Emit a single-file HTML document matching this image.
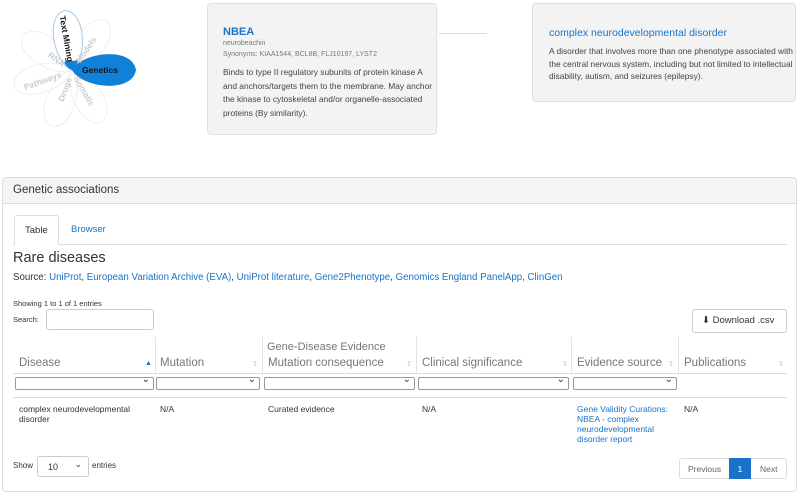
<!DOCTYPE html>
<html><head><meta charset="utf-8"><style>
*{box-sizing:border-box;margin:0;padding:0}
body{width:800px;height:497px;background:#fff;font-family:"Liberation Sans",Arial,sans-serif;color:#333;position:relative;overflow:hidden;font-size:9px}
.a{position:absolute}
.card{position:absolute;background:#f3f3f3;border:1px solid #e0e0e0;border-radius:4px}
.blue{color:#1a73c8}
.th{position:absolute;top:357px;font-size:11.5px;color:#777}
.sep{position:absolute;top:337px;height:36px;border-left:1px solid #e3e3e3}
.sel{position:absolute;top:377px;height:13px;border:1px solid #999;border-radius:2px;background:#fff}
.sel:after{content:"⌄";position:absolute;right:3px;top:-4px;font-size:10px;color:#333}
.srt{position:absolute;top:360px;font-size:7px;color:#ccc}
.td{position:absolute;top:404px;font-size:8.5px;line-height:10px;color:#333}
</style></head><body>
<svg class="a" style="left:0;top:0" width="200" height="140">
<g transform="translate(72,70)">
<g fill="none" stroke="#efefef" stroke-width="1">
<path transform="rotate(-55)" d="M0,0 C8,-16 56,-22 60,0 C56,22 8,16 0,0Z"/>
<path transform="rotate(-145)" d="M0,0 C8,-16 56,-22 60,0 C56,22 8,16 0,0Z"/>
<path transform="rotate(165)" d="M0,0 C8,-16 56,-22 60,0 C56,22 8,16 0,0Z"/>
<path transform="rotate(110)" d="M0,0 C8,-16 56,-22 60,0 C56,22 8,16 0,0Z"/>
<path transform="rotate(60)" d="M0,0 C8,-16 56,-22 60,0 C56,22 8,16 0,0Z"/>
</g>
<path transform="rotate(-97)" d="M0,0 C8,-16 56,-22 60,0 C56,22 8,16 0,0Z" fill="#fff" stroke="#9cc8ef" stroke-width="1"/>
<path transform="rotate(-97)" d="M0,0 C2,-4 6,-6 9,-7 L9,7 C6,6 2,4 0,0Z" fill="#0f82d8"/>
<path d="M0,0 C10,-18 60,-24 64,0 C60,24 10,18 0,0Z" fill="#0f82d8"/>
<g font-family="Liberation Sans,sans-serif" font-weight="bold" font-size="8.5">
<text x="10" y="3" fill="#111">Genetics</text>
<text transform="rotate(80)" x="-55" y="3" fill="#111">Text Mining</text>
<g fill="#ccc">
<text transform="rotate(-55)" x="10" y="3">Models</text>
<text transform="rotate(35)" x="-28" y="3">RNA</text>
<text transform="rotate(-20)" x="-51" y="3">Pathways</text>
<text transform="rotate(-70)" x="-33" y="3">Drugs</text>
<text transform="rotate(60)" x="8" y="3">Somatic</text>
</g></g></g></svg>

<div class="card" style="left:207px;top:3px;width:230px;height:132px"></div>
<div class="a blue" style="left:223px;top:26px;font-size:11px;font-weight:bold">NBEA</div>
<div class="a" style="left:223px;top:40px;font-size:7px;color:#777">neurobeachin</div>
<div class="a" style="left:223px;top:51px;font-size:7px;color:#777">Synonyms: KIAA1544, BCL8B, FLJ10197, LYST2</div>
<div class="a" style="left:223px;top:66px;width:214px;font-size:8.4px;line-height:13.5px;color:#444">Binds to type II regulatory subunits of protein kinase A and anchors/targets them to the membrane. May anchor the kinase to cytoskeletal and/or organelle-associated proteins (By similarity).</div>
<div class="a" style="left:439px;top:33px;width:48px;border-top:1px solid #ddd"></div>
<div class="card" style="left:532px;top:3px;width:264px;height:99px"></div>
<div class="a blue" style="left:549px;top:27px;font-size:10.5px">complex neurodevelopmental disorder</div>
<div class="a" style="left:549px;top:45px;width:245px;font-size:8.4px;line-height:12.5px;color:#444">A disorder that involves more than one phenotype associated with the central nervous system, including but not limited to intellectual disability, autism, and seizures (epilepsy).</div>

<div class="a" style="left:2px;top:177px;width:795px;height:315px;border:1px solid #ddd;border-radius:4px"></div>
<div class="a" style="left:3px;top:178px;width:793px;height:26px;background:#f5f5f5;border-bottom:1px solid #ddd;border-radius:4px 4px 0 0"></div>
<div class="a" style="left:13px;top:184px;font-size:11.5px;color:#333">Genetic associations</div>
<div class="a" style="left:13px;top:244px;width:774px;border-top:1px solid #ddd"></div>
<div class="a" style="left:14px;top:215px;width:45px;height:30px;border:1px solid #ddd;border-bottom:1px solid #fff;border-radius:3px 3px 0 0;background:#fff;font-size:9.5px;padding:9px 0 0 10px">Table</div>
<div class="a blue" style="left:71px;top:224px;font-size:9.5px">Browser</div>
<div class="a" style="left:13px;top:250px;font-size:14.5px;color:#333">Rare diseases</div>
<div class="a" style="left:13px;top:272px;font-size:9.7px">Source: <span class="blue">UniProt</span>, <span class="blue">European Variation Archive (EVA)</span>, <span class="blue">UniProt literature</span>, <span class="blue">Gene2Phenotype</span>, <span class="blue">Genomics England PanelApp</span>, <span class="blue">ClinGen</span></div>
<div class="a" style="left:13px;top:299px;font-size:7.5px">Showing 1 to 1 of 1 entries</div>
<div class="a" style="left:13px;top:315px;font-size:7.5px">Search:</div>
<div class="a" style="left:46px;top:309px;width:108px;height:21px;border:1px solid #ccc;border-radius:3px"></div>
<div class="a" style="left:692px;top:309px;width:95px;height:24px;border:1px solid #ccc;border-radius:3px;font-size:9.5px;padding:5px 0 0 9px">⬇ Download .csv</div>

<div class="a" style="left:267px;top:341px;font-size:11px;color:#777">Gene-Disease Evidence</div>
<div class="th" style="left:19px">Disease</div>
<div class="th" style="left:160px">Mutation</div>
<div class="th" style="left:268px">Mutation consequence</div>
<div class="th" style="left:422px">Clinical significance</div>
<div class="th" style="left:577px">Evidence source</div>
<div class="th" style="left:684px">Publications</div>
<div class="srt" style="left:145px;color:#1a73c8">▲</div>
<div class="srt" style="left:252px">⇕</div>
<div class="srt" style="left:406px">⇕</div>
<div class="srt" style="left:562px">⇕</div>
<div class="srt" style="left:668px">⇕</div>
<div class="srt" style="left:778px">⇕</div>
<div class="sep" style="left:155px"></div><div class="sep" style="left:262px"></div><div class="sep" style="left:416px"></div><div class="sep" style="left:571px"></div><div class="sep" style="left:678px"></div>
<div class="a" style="left:13px;top:373px;width:774px;border-top:1px solid #ddd"></div>
<div class="sel" style="left:15px;width:139px"></div>
<div class="sel" style="left:156px;width:104px"></div>
<div class="sel" style="left:264px;width:151px"></div>
<div class="sel" style="left:418px;width:151px"></div>
<div class="sel" style="left:573px;width:104px"></div>
<div class="a" style="left:13px;top:397px;width:774px;border-top:1px solid #ddd"></div>
<div class="td" style="left:19px;width:130px">complex neurodevelopmental disorder</div>
<div class="td" style="left:160px">N/A</div>
<div class="td" style="left:268px">Curated evidence</div>
<div class="td" style="left:422px">N/A</div>
<div class="td blue" style="left:577px;width:100px;color:#1a73c8">Gene Validity Curations: NBEA - complex neurodevelopmental disorder report</div>
<div class="td" style="left:684px">N/A</div>

<div class="a" style="left:13px;top:461px;font-size:8px">Show</div>
<div class="a" style="left:37px;top:456px;width:52px;height:21px;border:1px solid #ccc;border-radius:3px;font-size:9px;padding:5px 0 0 10px">10<span style="position:absolute;right:6px;top:2px">⌄</span></div>
<div class="a" style="left:92px;top:461px;font-size:8px">entries</div>
<div class="a" style="left:679px;top:458px;width:108px;height:21px;border:1px solid #ddd;border-radius:3px"></div>
<div class="a" style="left:688px;top:464px;font-size:8.5px;color:#666">Previous</div>
<div class="a" style="left:729px;top:458px;width:22px;height:21px;background:#1a73c8;color:#fff;font-size:8.5px;text-align:center;padding-top:6px">1</div>
<div class="a" style="left:760px;top:464px;font-size:8.5px;color:#666">Next</div>
</body></html>
